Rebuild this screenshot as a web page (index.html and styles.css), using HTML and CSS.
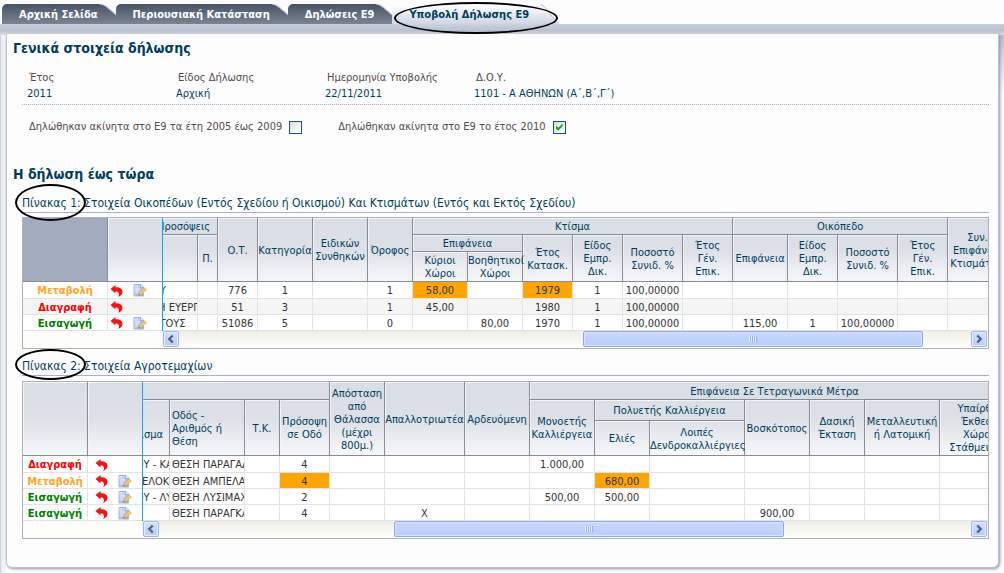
FILE: index.html
```html
<!DOCTYPE html>
<html lang="el">
<head>
<meta charset="utf-8">
<title>Υποβολή Δήλωσης Ε9</title>
<link rel="stylesheet" href="styles.css">
</head>
<body>
<svg class="defs" aria-hidden="true">
  <defs>
    <linearGradient id="tabfill" gradientUnits="userSpaceOnUse" x1="0" y1="0" x2="0" y2="20">
      <stop offset="0" stop-color="#485464"/><stop offset="1" stop-color="#7b8493"/>
    </linearGradient>
    <linearGradient id="tablight" x1="0" y1="0" x2="0" y2="1">
      <stop offset="0" stop-color="#ffffff"/><stop offset="1" stop-color="#cfd5e2"/>
    </linearGradient>
    <linearGradient id="sheet" x1="0" y1="0" x2="1" y2="1">
      <stop offset="0" stop-color="#e3ebfa"/><stop offset="1" stop-color="#86a3d8"/>
    </linearGradient>
    <symbol id="tab-end" viewBox="0 0 18 20"><path d="M0 0C7 1 9 5 18 12V20H0Z" fill="url(#tabfill)"/><path d="M1 0C8 1 10 5 18 11.500" fill="none" stroke="#b9bec6"/></symbol>
    <symbol id="tab-end-light" viewBox="0 0 18 20"><path d="M0 0C5 2 8 10 18 20H0Z" fill="url(#tablight)"/><path d="M0 .5C5 2 8 10 17.500 19.500" fill="none" stroke="#b5bac5"/></symbol>
    <symbol id="undo" viewBox="0 0 13 12"><path d="M.5 4 5.500 0V2.200C9.500 2 12.500 3.600 12.500 6.800C12.500 9.400 10.800 11 8 12C9 10.800 9.400 9.300 8.800 8.200C8.200 7 7 6.600 5.500 6.600V8.600Z" fill="#fb0f0f"/></symbol>
    <symbol id="edit" viewBox="0 0 14 13"><path d="M1 .5H8L10.500 3V12H1Z" fill="url(#sheet)" stroke="#a3b5dc"/><path d="M7.500.5V3.500H10.500" fill="#f4f8ff" stroke="#7f98cf" stroke-width=".7"/><path d="M2.500 5H7M2.500 7H6M2.500 9H5" stroke="#fff" stroke-width=".7"/><path d="M5.500 11.300 6.200 9 11.300 3.800 13.400 5.800 8 10.800Z" fill="#f4cb5c" stroke="#d8a24a" stroke-width=".6"/><path d="M5.500 11.300 6 9.900 7 10.900Z" fill="#556"/></symbol>
    <symbol id="left" viewBox="0 0 16 16"><path d="M10 4 6 8 10 12" fill="none" stroke="#4d6185" stroke-width="2.600"/></symbol>
    <symbol id="right" viewBox="0 0 16 16"><path d="M6 4 10 8 6 12" fill="none" stroke="#4d6185" stroke-width="2.600"/></symbol>
  </defs>
</svg>

<nav class="tabs">
  <a class="tab" href="#"><span class="tab-text">Αρχική Σελίδα</span><svg class="tab-end"><use href="#tab-end"/></svg></a>
  <a class="tab" href="#"><span class="tab-text">Περιουσιακή Κατάσταση</span><svg class="tab-end"><use href="#tab-end"/></svg></a>
  <a class="tab" href="#"><span class="tab-text">Δηλώσεις Ε9</span><svg class="tab-end"><use href="#tab-end"/></svg></a>
  <a class="tab tab-active" href="#" aria-current="page"><span class="tab-text">Υποβολή Δήλωσης Ε9</span><svg class="tab-end"><use href="#tab-end-light"/></svg><i class="ring"></i></a>
</nav>

<div class="frame">
<main class="panel">
  <h2>Γενικά στοιχεία δήλωσης</h2>
  <dl class="facts">
    <div><dt>Έτος</dt><dd>2011</dd></div>
    <div><dt>Είδος Δήλωσης</dt><dd>Αρχική</dd></div>
    <div><dt>Ημερομηνία Υποβολής</dt><dd>22/11/2011</dd></div>
    <div><dt>Δ.Ο.Υ.</dt><dd>1101 - Α ΑΘΗΝΩΝ (Α΄,Β΄,Γ΄)</dd></div>
  </dl>
  <div class="checks">
    <div class="check"><label for="c1">Δηλώθηκαν ακίνητα στο Ε9 τα έτη 2005 έως 2009</label><input type="checkbox" id="c1"></div>
    <div class="check"><label for="c2">Δηλώθηκαν ακίνητα στο Ε9 το έτος 2010</label><input type="checkbox" id="c2" checked></div>
  </div>

  <h2>Η δήλωση έως τώρα</h2>

  <section>
    <h3><span class="mark">Πίνακας 1:<i class="ring"></i></span> Στοιχεία Οικοπέδων (Εντός Σχεδίου ή Οικισμού) Και Κτισμάτων (Εντός και Εκτός Σχεδίου)</h3>
    <div class="grid grid-lots">
      <div class="frozen">
        <table>
          <colgroup><col class="w85"><col class="w54"></colgroup>
          <thead><tr class="h-full"><th class="corner"></th><th></th></tr></thead>
          <tbody>
            <tr><td class="st change">Μεταβολή</td><td><div class="acts"><button aria-label="Αναίρεση"><svg class="undo"><use href="#undo"/></svg></button><button aria-label="Επεξεργασία"><svg class="edit"><use href="#edit"/></svg></button></div></td></tr>
            <tr><td class="st delete">Διαγραφή</td><td><div class="acts"><button aria-label="Αναίρεση"><svg class="undo"><use href="#undo"/></svg></button></div></td></tr>
            <tr><td class="st insert">Εισαγωγή</td><td><div class="acts"><button aria-label="Αναίρεση"><svg class="undo"><use href="#undo"/></svg></button><button aria-label="Επεξεργασία"><svg class="edit"><use href="#edit"/></svg></button></div></td></tr>
          </tbody>
        </table>
      </div>
      <div class="pane">
        <div class="view">
        <table class="scrolled">
          <colgroup><col class="w48"><col class="w20"><col class="w40"><col class="w55"><col class="w55"><col class="w45"><col class="w55"><col class="w55"><col class="w50"><col class="w50"><col class="w60"><col class="w50"><col class="w55"><col class="w50"><col class="w60"><col class="w50"><col class="w60"></colgroup>
          <thead>
            <tr class="h1"><th colspan="2">Προσόψεις</th><th rowspan="3">Ο.Τ.</th><th rowspan="3">Κατηγορία</th><th rowspan="3">Ειδικών<br>Συνθηκών</th><th rowspan="3">Όροφος</th><th colspan="6">Κτίσμα</th><th colspan="4">Οικόπεδο</th><th rowspan="3">Συν.<br>Επιφάνεια<br>Κτισμάτων</th></tr>
            <tr class="h2"><th rowspan="2"></th><th rowspan="2">Π.</th><th colspan="2">Επιφάνεια</th><th rowspan="2">Έτος<br>Κατασκ.</th><th rowspan="2">Είδος<br>Εμπρ.<br>Δικ.</th><th rowspan="2">Ποσοστό<br>Συνιδ. %</th><th rowspan="2">Έτος<br>Γέν.<br>Επικ.</th><th rowspan="2">Επιφάνεια</th><th rowspan="2">Είδος<br>Εμπρ.<br>Δικ.</th><th rowspan="2">Ποσοστό<br>Συνιδ. %</th><th rowspan="2">Έτος<br>Γέν.<br>Επικ.</th></tr>
            <tr class="h3"><th>Κύριοι<br>Χώροι</th><th>Βοηθητικοί<br>Χώροι</th></tr>
          </thead>
          <tbody>
            <tr><td class="txt">ΟΥ</td><td></td><td>776</td><td>1</td><td></td><td>1</td><td class="hot">58,00</td><td></td><td class="hot">1979</td><td>1</td><td>100,00000</td><td></td><td></td><td></td><td></td><td></td><td></td></tr>
            <tr><td class="txt">ΤΗ ΕΥΕΡΓ</td><td></td><td>51</td><td>3</td><td></td><td>1</td><td>45,00</td><td></td><td>1980</td><td>1</td><td>100,00000</td><td></td><td></td><td></td><td></td><td></td><td></td></tr>
            <tr><td class="txt">ΗΤΟΥΣ</td><td></td><td>51086</td><td>5</td><td></td><td>0</td><td></td><td>80,00</td><td>1970</td><td>1</td><td>100,00000</td><td></td><td>115,00</td><td>1</td><td>100,00000</td><td></td><td></td></tr>
          </tbody>
        </table>
        </div>
        <div class="scroll"><button aria-label="Αριστερά"><svg><use href="#left"/></svg></button><div class="track"><div class="thumb"><i></i></div></div><button aria-label="Δεξιά"><svg><use href="#right"/></svg></button></div>
      </div>
    </div>
  </section>

  <section>
    <h3><span class="mark">Πίνακας 2:<i class="ring"></i></span> Στοιχεία Αγροτεμαχίων</h3>
    <div class="grid grid-fields">
      <div class="frozen">
        <table>
          <colgroup><col class="w65"><col class="w54"></colgroup>
          <thead><tr class="h-full"><th></th><th></th></tr></thead>
          <tbody>
            <tr><td class="st delete">Διαγραφή</td><td><div class="acts"><button aria-label="Αναίρεση"><svg class="undo"><use href="#undo"/></svg></button></div></td></tr>
            <tr><td class="st change">Μεταβολή</td><td><div class="acts"><button aria-label="Αναίρεση"><svg class="undo"><use href="#undo"/></svg></button><button aria-label="Επεξεργασία"><svg class="edit"><use href="#edit"/></svg></button></div></td></tr>
            <tr><td class="st insert">Εισαγωγή</td><td><div class="acts"><button aria-label="Αναίρεση"><svg class="undo"><use href="#undo"/></svg></button><button aria-label="Επεξεργασία"><svg class="edit"><use href="#edit"/></svg></button></div></td></tr>
            <tr><td class="st insert">Εισαγωγή</td><td><div class="acts"><button aria-label="Αναίρεση"><svg class="undo"><use href="#undo"/></svg></button><button aria-label="Επεξεργασία"><svg class="edit"><use href="#edit"/></svg></button></div></td></tr>
          </tbody>
        </table>
      </div>
      <div class="pane">
        <div class="view">
        <table class="scrolled">
          <colgroup><col class="w70"><col class="w75"><col class="w35"><col class="w50"><col class="w55"><col class="w80"><col class="w65"><col class="w65"><col class="w55"><col class="w95"><col class="w65"><col class="w55"><col class="w75"><col class="w80"></colgroup>
          <thead>
            <tr class="h1"><th colspan="4"></th><th rowspan="3">Απόσταση<br>από<br>Θάλασσα<br>(μέχρι<br>800μ.)</th><th rowspan="3">Απαλλοτριωτέα</th><th rowspan="3">Αρδευόμενη</th><th colspan="7">Επιφάνεια Σε Τετραγωνικά Μέτρα</th></tr>
            <tr class="h2"><th rowspan="2"><br>Διαμέρισμα</th><th rowspan="2" class="txt">Οδός -<br>Αριθμός ή<br>Θέση</th><th rowspan="2">Τ.Κ.</th><th rowspan="2">Πρόσοψη<br>σε Οδό</th><th rowspan="2">Μονοετής<br>Καλλιέργεια</th><th colspan="2">Πολυετής Καλλιέργεια</th><th rowspan="2">Βοσκότοπος</th><th rowspan="2">Δασική<br>Έκταση</th><th rowspan="2">Μεταλλευτική<br>ή Λατομική</th><th rowspan="2">Υπαίρθια<br>Έκθεση<br>Χώρος<br>Στάθμευσης</th></tr>
            <tr class="h3"><th>Ελιές</th><th>Λοιπές<br>Δενδροκαλλιέργιες</th></tr>
          </thead>
          <tbody>
            <tr><td class="txt">ΓΕΩΡΓΙΟΥ - ΚΑΛ</td><td class="txt">ΘΕΣΗ ΠΑΡΑΓΑΔΙ</td><td></td><td>4</td><td></td><td></td><td></td><td>1.000,00</td><td></td><td></td><td></td><td></td><td></td><td></td></tr>
            <tr><td class="txt">ΑΝ ΑΜΠΕΛΟΚΗ</td><td class="txt">ΘΕΣΗ ΑΜΠΕΛΑΚ</td><td></td><td class="hot">4</td><td></td><td></td><td></td><td></td><td class="hot">680,00</td><td></td><td></td><td></td><td></td><td></td></tr>
            <tr><td class="txt">ΓΕΩΡΓΙΟΥ - ΛΥΣ</td><td class="txt">ΘΕΣΗ ΛΥΣΙΜΑΧΗ</td><td></td><td>2</td><td></td><td></td><td></td><td>500,00</td><td>500,00</td><td></td><td></td><td></td><td></td><td></td></tr>
            <tr><td></td><td class="txt">ΘΕΣΗ ΠΑΡΑΓΚΑ</td><td></td><td>4</td><td></td><td>Χ</td><td></td><td></td><td></td><td></td><td>900,00</td><td></td><td></td><td></td></tr>
          </tbody>
        </table>
        </div>
        <div class="scroll"><button aria-label="Αριστερά"><svg><use href="#left"/></svg></button><div class="track"><div class="thumb"><i></i></div></div><button aria-label="Δεξιά"><svg><use href="#right"/></svg></button></div>
      </div>
    </div>
  </section>
</main>
</div>
</body>
</html>
```
FILE: styles.css
```css
* { box-sizing: border-box; }
body {
  margin: 0;
  background: #fdfdfe;
  color: #333;
  font: 11px/13px "DejaVu Sans Condensed", "Noto Sans", sans-serif;
}
button { padding: 0; border: 0; background: none; cursor: pointer; }
svg { display: block; }
.defs { position: absolute; width: 0; height: 0; }

/* Tabs */
.tabs { display: flex; padding: 4px 2px 0; height: 24px; }
.tab {
  position: relative;
  display: flex;
  color: #fff;
  font-weight: bold;
  line-height: 22px;
  text-decoration: none;
  white-space: nowrap;
}
.tab-text {
  height: 20px;
  padding: 0 1px 0 17px;
  border-radius: 5px 0 0 0;
  background: linear-gradient(#485464, #7b8493);
}
.tab-end { width: 18px; height: 20px; margin-right: -1px; }
.tab-active { color: #003d5b; }
.tab-active .tab-text { padding-right: 12px; background: linear-gradient(#fff, #cfd5e2); }
.ring {
  position: absolute;
  border: 2px solid #000;
  border-radius: 50%;
  pointer-events: none;
}
.tab .ring { inset: -2px 0 -10px 2px; }

/* Frame */
.frame {
  padding: 10px 5px 5px 6px;
  background:
    linear-gradient(#ccd2de, #b9c0d0 60%, #dcdee3) top / 100% 11px no-repeat,
    linear-gradient(#b8c0ce, #fdfdfe 60px) right 10px / 5px 100% no-repeat,
    linear-gradient(90deg, #c9cedb, #eff0f6 2px, #f4f5fa) left / 6px 100% no-repeat;
}
.panel {
  padding: 5px 9px 28px 6px;
  border: 1px solid #bbc2d4;
  border-top: 0;
  border-radius: 0 0 6px 6px;
  background: #fdfdfe;
  box-shadow: 1px 1px 3px #8f949f;
}
h2 { margin: 0; color: #003d5b; font-size: 14px; line-height: 18px; }
.facts {
  display: flex;
  margin: 13px 0 0 9px;
  padding: 0 0 2px 5px;
  border-bottom: 1px dotted #9fadcb;
}
.facts div { width: 149px; white-space: nowrap; line-height: 16px; }
.facts dt { padding-left: 2px; color: #504a4a; }
.facts dd { margin: 0; color: #003d5b; }
.checks { display: flex; gap: 36px; padding: 15px 16px 31px; color: #504a4a; }
.check { display: flex; align-items: center; gap: 7px; line-height: 14px; }
.check input {
  appearance: none;
  width: 13px;
  height: 13px;
  margin: 0;
  border: 1px solid #1c4f80;
  background: linear-gradient(135deg, #dcdcd8, #fff);
}
.check input:checked::after {
  content: "";
  display: block;
  width: 7px;
  height: 7px;
  margin: 2px;
  background: #21a121;
  clip-path: polygon(0 30%, 38% 62%, 100% 0, 100% 40%, 38% 100%, 0 70%);
}
h3 {
  margin: 12px 0 4px 9px;
  border-bottom: 1px solid #a9b2cc;
  color: #003d5b;
  font-size: 12px;
  font-weight: normal;
  line-height: 17px;
}
section + section h3 { margin-top: 9px; margin-bottom: 5px; }
.mark { position: relative; }
.mark .ring { inset: -12px -5px -11px -7px; }
section + section .mark .ring { inset: -10px -5px -7px -7px; }

/* Data grids */
.grid { display: flex; margin-left: 9px; border: 1px solid #b0b0b0; background: #fdfdf9; }
.frozen { flex: none; }
.pane { flex: 1; min-width: 0; }
.view { overflow: hidden; border-left: 1px solid #11a7e2; }
table { width: 1px; table-layout: fixed; border-collapse: separate; border-spacing: 0; background: #fff; }
thead { background: linear-gradient(#d9dde4, #dde0e7 50%, #f7f8fa); }
th, td { padding: 1px 0 0; text-align: center; white-space: nowrap; }
th {
  border: solid #868b94;
  border-width: 0 1px 1px 0;
  box-shadow: inset 1px 1px #f2f4f7;
  color: #003d5b;
  font-weight: normal;
}
td { height: 16px; overflow: hidden; border: solid #e3e3e3; border-width: 0 1px 1px 0; }
tbody tr:first-child td { height: 17px; }
.frozen th:last-child, .frozen td:last-child { border-right: 0; }
.txt { padding-left: 2px; text-align: left; }
.corner { background: #a2acbe; box-shadow: none; }
.hot { background: #ffa500; }
.st { font-weight: bold; }
.change { color: #ffa524; }
.delete { color: #f00; }
.insert { color: #008000; }
.acts { display: flex; align-items: center; gap: 10px; height: 14px; }
.undo { width: 13px; height: 12px; }
.edit { width: 14px; height: 13px; }

.grid-lots .h-full { height: 64px; }
.grid-lots .h1, .grid-lots .h2 { height: 17px; }
.grid-lots .h3 { height: 30px; }
.grid-lots .scrolled { margin-left: -13px; }
.grid-lots .acts { padding-left: 2px; }
.grid-lots tbody tr:nth-child(2) { background: #f5f5f5; }

.grid-fields .h-full { height: 74px; }
.grid-fields .h1 { height: 18px; }
.grid-fields .h2 { height: 21px; }
.grid-fields .h3 { height: 35px; }
.grid-fields .scrolled { margin-left: -43px; }
.grid-fields .acts { padding-left: 7px; }

.w20 { width: 20px; } .w35 { width: 35px; } .w40 { width: 40px; } .w45 { width: 45px; }
.w48 { width: 48px; } .w50 { width: 50px; } .w54 { width: 54px; } .w55 { width: 55px; }
.w60 { width: 60px; } .w65 { width: 65px; } .w70 { width: 70px; } .w75 { width: 75px; }
.w80 { width: 80px; } .w85 { width: 85px; } .w95 { width: 95px; }

/* Scroll bars */
.scroll { display: flex; height: 17px; padding: 0 1px; background: linear-gradient(#efede6, #fffffe); }
.scroll button {
  width: 16px;
  height: 16px;
  border: 1px solid #9fb5ea;
  border-radius: 2px;
  background: linear-gradient(#d3e0fe, #b4cbfb);
  box-shadow: inset 0 0 0 1px #e6eefe;
}
.scroll svg { width: 14px; height: 14px; }
.track { flex: 1; }
.thumb {
  display: flex;
  align-items: center;
  justify-content: center;
  height: 16px;
  border: 1px solid #8ea9e0;
  border-radius: 2px;
  background: linear-gradient(#c9d8fd, #b8cdfb);
  box-shadow: inset 0 0 0 1px #d6e2fe;
}
.thumb i { width: 8px; height: 6px; background: repeating-linear-gradient(90deg, #eef4fe 0 1px, #8cb0f8 1px 2px); }
.grid-lots .thumb { width: 43%; margin-left: 51%; }
.grid-fields .thumb { width: 48%; margin-left: 29%; }
```
